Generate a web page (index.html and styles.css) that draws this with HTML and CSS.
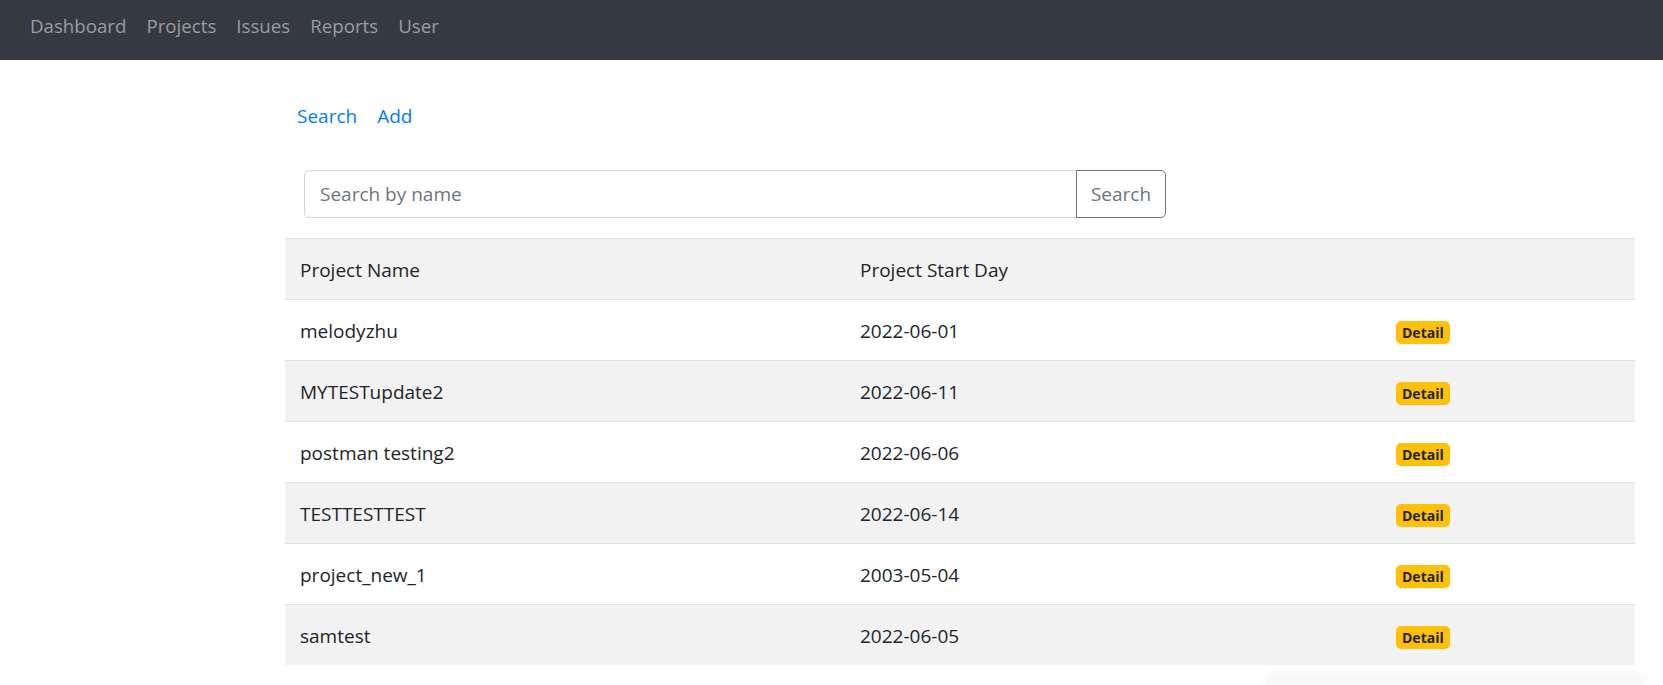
FILE: index.html
```html
<!DOCTYPE html>
<html lang="en">
<head>
<meta charset="utf-8">
<title>Projects</title>
<link rel="stylesheet" href="styles.css">
</head>
<body>
<nav class="topbar">
  <a class="toplink" href="#">Dashboard</a>
  <a class="toplink" href="#">Projects</a>
  <a class="toplink" href="#">Issues</a>
  <a class="toplink" href="#">Reports</a>
  <a class="toplink" href="#">User</a>
</nav>
<main class="main">
  <div class="subnav">
    <a class="sublink" href="#">Search</a>
    <a class="sublink" href="#">Add</a>
  </div>
  <form class="search-form">
    <input class="search-input" type="text" placeholder="Search by name">
    <button class="search-btn" type="button">Search</button>
  </form>
  <table class="projects">
    <colgroup>
      <col class="c1"><col class="c2"><col class="c3">
    </colgroup>
    <tr class="odd"><th>Project Name</th><th>Project Start Day</th><th></th></tr>
    <tr><td>melodyzhu</td><td>2022-06-01</td><td><span class="badge">Detail</span></td></tr>
    <tr class="odd"><td>MYTESTupdate2</td><td>2022-06-11</td><td><span class="badge">Detail</span></td></tr>
    <tr><td>postman testing2</td><td>2022-06-06</td><td><span class="badge">Detail</span></td></tr>
    <tr class="odd"><td>TESTTESTTEST</td><td>2022-06-14</td><td><span class="badge">Detail</span></td></tr>
    <tr><td>project_new_1</td><td>2003-05-04</td><td><span class="badge">Detail</span></td></tr>
    <tr class="odd"><td>samtest</td><td>2022-06-05</td><td><span class="badge">Detail</span></td></tr>
  </table>
</main>
<div class="floating-panel"></div>
</body>
</html>
```
FILE: styles.css
```css
html, body {
  margin: 0;
  padding: 0;
  height: 685px;
  overflow: hidden;
}
body {
  font-family: "Open Sans", "Noto Sans", sans-serif;
  font-size: 19px;
  line-height: 30px;
  color: #212529;
  background: #fff;
  position: relative;
}
.topbar {
  display: flex;
  height: 60px;
  box-sizing: border-box;
  padding: 11px 0 0 20px;
  background: #343a40;
  font-size: 18.7px;
}
.toplink {
  padding: 0 10px;
  color: #9a9da0;
  text-decoration: none;
  height: 30px;
}
.main {
  margin-left: 285px;
  width: 1350px;
}
.subnav {
  display: flex;
  padding: 41px 0 0 2px;
}
.sublink {
  padding: 0 10px;
  color: #007bff;
  text-decoration: none;
}
.search-form {
  display: flex;
  margin: 39px 0 0 19px;
  width: 862px;
}
.search-input {
  flex: 1;
  height: 48px;
  box-sizing: border-box;
  border: 1px solid #ced4da;
  border-radius: 5px 0 0 5px;
  padding: 0 15px;
  font: inherit;
  color: #495057;
  outline: none;
}
.search-input::placeholder {
  color: #6c757d;
}
.search-btn {
  width: 90px;
  height: 48px;
  box-sizing: border-box;
  border: 1px solid #6c757d;
  border-radius: 0 5px 5px 0;
  margin-left: -1px;
  background: #fff;
  color: #6c757d;
  font: inherit;
  padding: 0;
}
.projects {
  margin-top: 20px;
  width: 1350px;
  border-collapse: collapse;
}
.c1 { width: 560px; }
.c2 { width: 536px; }
.c3 { width: 254px; }
.projects th,
.projects td {
  text-align: left;
  font-weight: normal;
  padding: 16px 15px 14px;
  border-top: 1px solid #dee2e6;
  height: 30px;
  vertical-align: middle;
}
.projects tr.odd {
  background: #f2f2f2;
}
.badge {
  display: inline-block;
  background: #ffc107;
  color: #212529;
  font-weight: 700;
  font-size: 14px;
  line-height: 15px;
  padding: 4px 6px;
  border-radius: 5px;
}
.floating-panel {
  position: absolute;
  left: 1266px;
  top: 677px;
  width: 378px;
  height: 8px;
  background: #f8f8f8;
  border-radius: 10px 10px 0 0;
  box-shadow: 0 -2px 8px 2px rgba(0,0,0,0.04);
}
```
